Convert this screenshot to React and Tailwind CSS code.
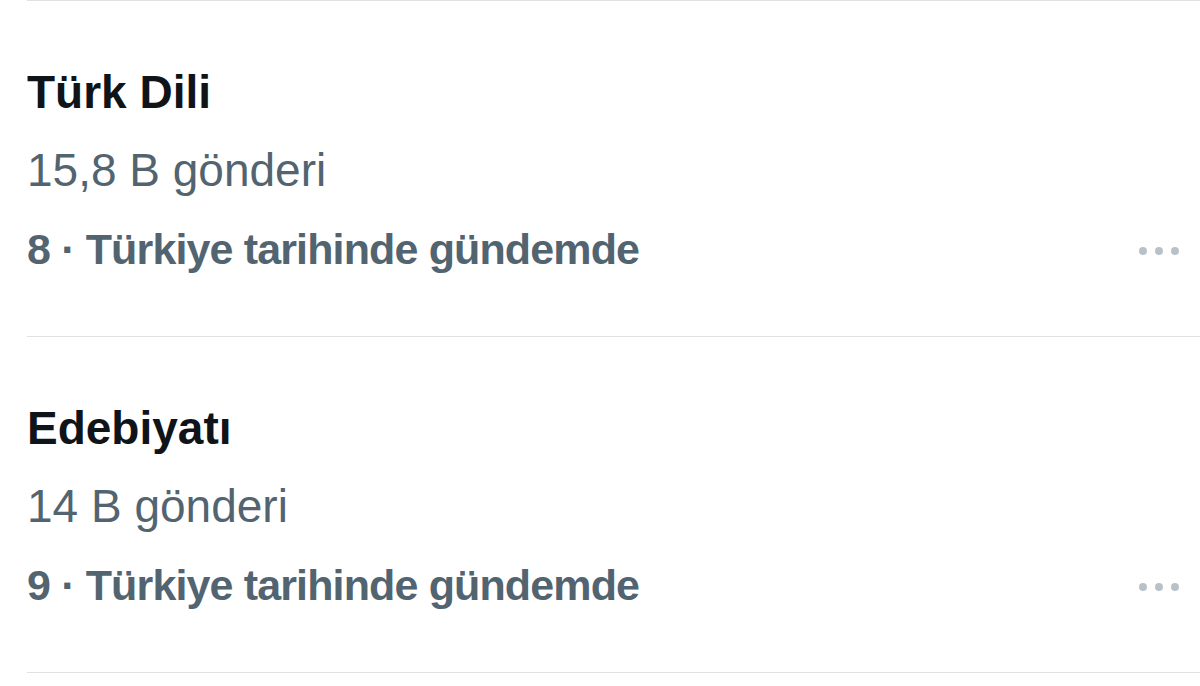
const trends = [
  { title: "Türk Dili", posts: "15,8 B gönderi", rank: 8 },
  { title: "Edebiyatı", posts: "14 B gönderi", rank: 9 },
];

function TrendRow({ title, posts, rank }) {
  return (
    <div className="border-t border-[#dfe2e4] pt-[52px] pb-[47px]">
      <div className="text-[46px] font-bold leading-[78px] text-[#0f1419]">{title}</div>
      <div className="text-[46px] leading-[78px] text-[#536471]">{posts}</div>
      <div className="flex items-center justify-between">
        <span className="text-[43px] font-bold leading-[80px] tracking-[-0.02em] text-[#536471]">
          {rank} · Türkiye tarihinde gündemde
        </span>
        <div className="flex items-center gap-2 pt-[3px] pr-[21px]">
          <span className="h-2 w-2 rounded-full bg-[#b9c1c8]" />
          <span className="h-2 w-2 rounded-full bg-[#b9c1c8]" />
          <span className="h-2 w-2 rounded-full bg-[#b9c1c8]" />
        </div>
      </div>
    </div>
  );
}

export default function App() {
  return (
    <div className="min-h-screen bg-white pl-[27px] font-['Liberation_Sans',Arial,sans-serif]">
      {trends.map((t) => (
        <TrendRow key={t.rank} {...t} />
      ))}
      <div className="border-t border-[#dfe2e4]" />
    </div>
  );
}
